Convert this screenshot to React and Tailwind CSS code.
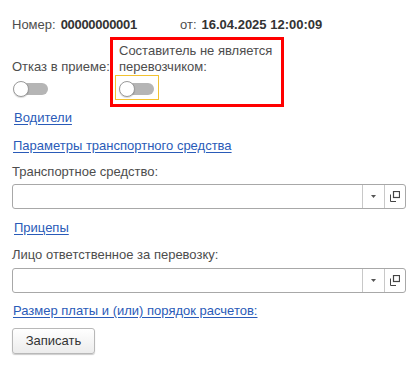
import React from "react";

function Toggle() {
  return (
    <div className="relative w-[35px] h-[16px]">
      <div className="absolute left-[3px] right-0 top-[2px] h-[12px] rounded-full bg-[#b5b5b5]" />
      <div className="absolute left-0 top-0 w-[16px] h-[16px] rounded-full bg-white border border-[#9a9a9a] shadow-[0_1px_1px_rgba(0,0,0,0.15)]" />
    </div>
  );
}

function InputField() {
  return (
    <div className="flex h-[25px] w-[394px] border border-[#a8a8a8] rounded-[3px] bg-white">
      <div className="flex-1" />
      <div className="w-[22px] border-l border-[#c8c8c8] flex items-center justify-center">
        <svg width="5" height="3" viewBox="0 0 5 3">
          <path d="M0 0 H5 L2.5 3 Z" fill="#555" />
        </svg>
      </div>
      <div className="w-[21px] border-l border-[#c8c8c8] flex items-center justify-center">
        <svg width="10" height="11" viewBox="0 0 10 11" fill="none">
          <rect x="3.5" y="0.5" width="6" height="6" stroke="#444" strokeWidth="1.2" />
          <path d="M0.5 3.5 V10.5 H6" stroke="#444" strokeWidth="1" />
        </svg>
      </div>
    </div>
  );
}

function Link({ children, className = "" }) {
  return (
    <div className={"leading-[16px] " + className}>
      <span className="text-[#2a5bb8] underline underline-offset-[2px] cursor-pointer">{children}</span>
    </div>
  );
}

export default function App() {
  return (
    <div
      className="w-[409px] h-[365px] bg-white text-[13px] text-[#4d4d4d] pl-[12px] pt-[17px]"
      style={{ fontFamily: '"Liberation Sans", Arial, sans-serif' }}
    >
      <div className="flex leading-[16px] h-[16px]">
        <div className="w-[168px] flex">
          <span>Номер:</span>
          <span className="ml-[5px] font-bold text-[#333] tracking-[-0.3px]">00000000001</span>
        </div>
        <span>от:</span>
        <span className="ml-[5px] font-bold text-[#333]">16.04.2025 12:00:09</span>
      </div>

      <div className="flex items-end mt-[4px]">
        <div className="w-[98px] flex flex-col pb-[10px]">
          <div className="leading-[16px]">Отказ в приеме:</div>
          <div className="mt-[6px] ml-[1px]">
            <Toggle />
          </div>
        </div>
        <div className="w-[174px] h-[70px] border-[3px] border-[#ff0000] px-[2px] pt-[3px]">
          <div className="leading-[16px] pl-[4px]">
            Составитель не является
            <br />
            перевозчиком:
          </div>
          <div className="w-[44px] h-[25px] border border-[#f2c230] pl-[3px] pt-[5px]">
            <Toggle />
          </div>
        </div>
      </div>

      <Link className="mt-[3px] pl-[2px]">Водители</Link>
      <Link className="mt-[12px] pl-[1px]">Параметры транспортного средства</Link>
      <div className="mt-[10px] leading-[16px]">Транспортное средство:</div>
      <div className="mt-[4px]">
        <InputField />
      </div>
      <Link className="mt-[11px] pl-[2px]">Прицепы</Link>
      <div className="mt-[11px] leading-[16px]">Лицо ответственное за перевозку:</div>
      <div className="mt-[5px]">
        <InputField />
      </div>
      <Link className="mt-[10px] pl-[1px]">Размер платы и (или) порядок расчетов:</Link>
      <div className="mt-[9px]">
        <button className="w-[83px] h-[26px] rounded-[3px] border border-[#b8b8b8] bg-gradient-to-b from-white to-[#ececec] shadow-[0_1px_1px_rgba(0,0,0,0.2)] text-[#333] text-[13px] leading-[16px]">
          Записать
        </button>
      </div>
    </div>
  );
}
